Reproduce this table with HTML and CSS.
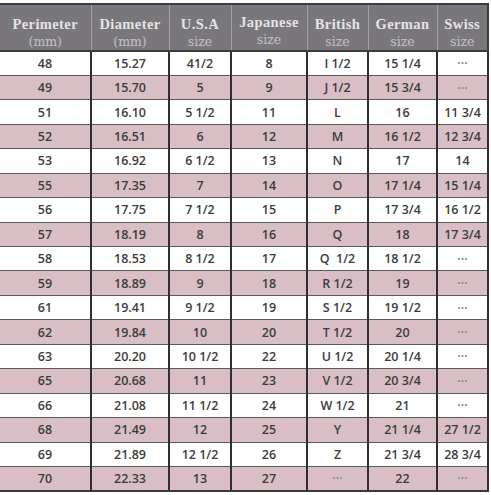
FILE: index.html
```html
<!DOCTYPE html>
<html lang="en">
<head>
  <meta charset="UTF-8">
  <title>Ring Size Chart</title>
  <link rel="stylesheet" href="styles.css">
</head>
<body>
  <table class="size-table">
    <colgroup>
      <col class="c-perim">
      <col class="c-diam">
      <col class="c-usa">
      <col class="c-jp">
      <col class="c-uk">
      <col class="c-de">
      <col class="c-ch">
    </colgroup>
    <thead>
      <tr>
        <th>Perimeter<span>(mm)</span></th>
        <th>Diameter<span>(mm)</span></th>
        <th>U.S.A<span>size</span></th>
        <th class="jp">Japanese<span>size</span></th>
        <th>British<span>size</span></th>
        <th>German<span>size</span></th>
        <th>Swiss<span>size</span></th>
      </tr>
    </thead>
    <tbody>
      <tr><td>48</td><td>15.27</td><td>41/2</td><td>8</td><td>I 1/2</td><td>15 1/4</td><td class="na">···</td></tr>
      <tr><td>49</td><td>15.70</td><td>5</td><td>9</td><td>J 1/2</td><td>15 3/4</td><td class="na">···</td></tr>
      <tr><td>51</td><td>16.10</td><td>5 1/2</td><td>11</td><td>L</td><td>16</td><td>11 3/4</td></tr>
      <tr><td>52</td><td>16.51</td><td>6</td><td>12</td><td>M</td><td>16 1/2</td><td>12 3/4</td></tr>
      <tr><td>53</td><td>16.92</td><td>6 1/2</td><td>13</td><td>N</td><td>17</td><td>14</td></tr>
      <tr><td>55</td><td>17.35</td><td>7</td><td>14</td><td>O</td><td>17 1/4</td><td>15 1/4</td></tr>
      <tr><td>56</td><td>17.75</td><td>7 1/2</td><td>15</td><td>P</td><td>17 3/4</td><td>16 1/2</td></tr>
      <tr><td>57</td><td>18.19</td><td>8</td><td>16</td><td>Q</td><td>18</td><td>17 3/4</td></tr>
      <tr><td>58</td><td>18.53</td><td>8 1/2</td><td>17</td><td>Q &nbsp;1/2</td><td>18 1/2</td><td class="na">···</td></tr>
      <tr><td>59</td><td>18.89</td><td>9</td><td>18</td><td>R 1/2</td><td>19</td><td class="na">···</td></tr>
      <tr><td>61</td><td>19.41</td><td>9 1/2</td><td>19</td><td>S 1/2</td><td>19 1/2</td><td class="na">···</td></tr>
      <tr><td>62</td><td>19.84</td><td>10</td><td>20</td><td>T 1/2</td><td>20</td><td class="na">···</td></tr>
      <tr><td>63</td><td>20.20</td><td>10 1/2</td><td>22</td><td>U 1/2</td><td>20 1/4</td><td class="na">···</td></tr>
      <tr><td>65</td><td>20.68</td><td>11</td><td>23</td><td>V 1/2</td><td>20 3/4</td><td class="na">···</td></tr>
      <tr><td>66</td><td>21.08</td><td>11 1/2</td><td>24</td><td>W 1/2</td><td>21</td><td class="na">···</td></tr>
      <tr><td>68</td><td>21.49</td><td>12</td><td>25</td><td>Y</td><td>21 1/4</td><td>27 1/2</td></tr>
      <tr><td>69</td><td>21.89</td><td>12 1/2</td><td>26</td><td>Z</td><td>21 3/4</td><td>28 3/4</td></tr>
      <tr><td>70</td><td>22.33</td><td>13</td><td>27</td><td class="na">···</td><td>22</td><td class="na">···</td></tr>
    </tbody>
  </table>
</body>
</html>
```

FILE: styles.css
```css
body {
  margin: 0;
  padding-top: 3px;
  background-color: #ffffff;
}

.size-table {
  border-collapse: collapse;
  table-layout: fixed;
  width: 488px;
  font-family: "Open Sans", "Liberation Sans", Arial, sans-serif;
}

.c-perim { width: 91px; }
.c-diam { width: 78px; }
.c-usa { width: 62px; }
.c-jp { width: 76px; }
.c-uk { width: 61px; }
.c-de { width: 69px; }
.c-ch { width: 51px; }

thead tr {
  height: 47px;
  background-color: #7a777c;
}

th {
  font-family: "Liberation Serif", "DejaVu Serif", serif;
  font-size: 14.5px;
  font-weight: bold;
  letter-spacing: 0.4px;
  line-height: 16px;
  color: #e4e4e4;
  border-top: 2px solid #3c3c3c;
  border-bottom: 2px solid #3c3c3c;
  border-right: 1px solid #a3a1a5;
  padding: 10px 0 0;
  text-align: center;
  vertical-align: middle;
}

th:last-child {
  border-right: 2px solid #3c3c3c;
}

th span {
  display: block;
  margin-top: 2px;
  font-family: "DejaVu Serif", serif;
  font-size: 12.5px;
  font-weight: normal;
  letter-spacing: 0;
  color: #c4c2c5;
}

th.jp {
  padding-top: 7px;
}

tbody tr {
  height: 24.44px;
  background-color: #ffffff;
}

tbody tr:nth-child(even) {
  background-color: #d9bfc5;
}

td {
  font-size: 12.5px;
  font-weight: 600;
  color: #3c3c3c;
  text-align: center;
  padding: 0;
  border-bottom: 1px solid #5a5a5a;
  border-right: 2px solid #2f2f2f;
}

tbody tr:last-child td {
  border-bottom: 2px solid #3a3a3a;
}

td.na {
  font-family: "Liberation Sans", Arial, sans-serif;
  font-size: 12px;
  font-weight: bold;
  color: #8e8e8e;
  letter-spacing: -0.5px;
}
```
